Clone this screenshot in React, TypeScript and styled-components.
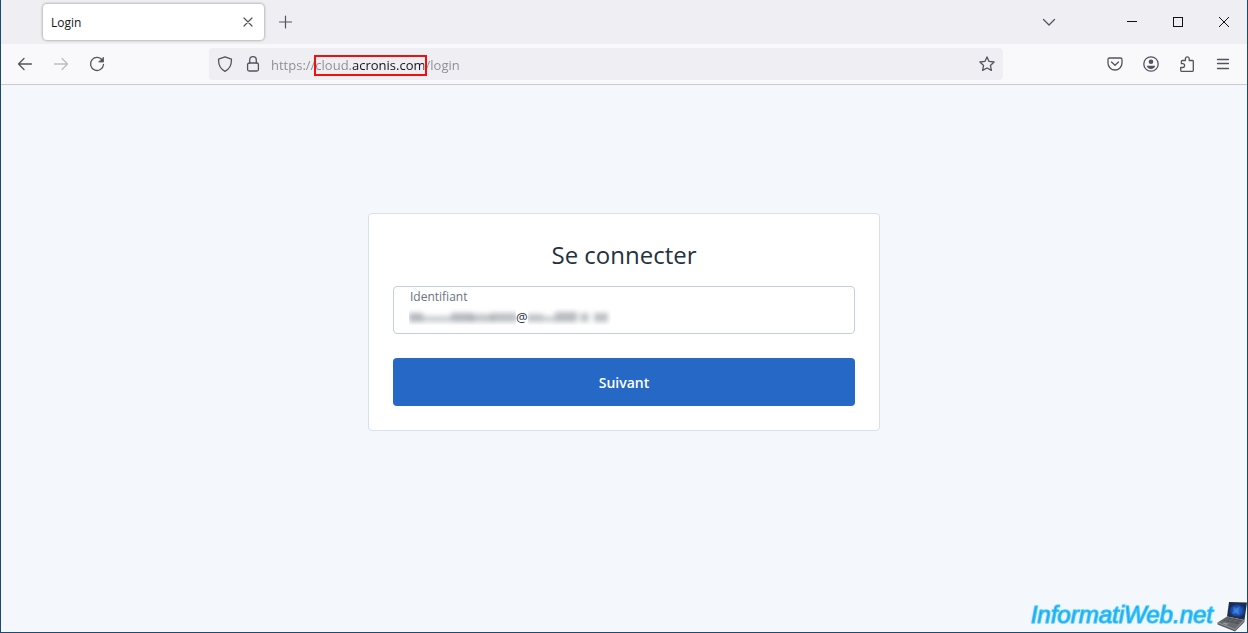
import React, { useState } from "react";
import styled, { createGlobalStyle } from "styled-components";

const GlobalStyle = createGlobalStyle`
  *, *::before, *::after { box-sizing: border-box; }
  body { margin: 0; font-family: "Open Sans", "Noto Sans", sans-serif; }
  button, input { font-family: inherit; }
`;

const Window = styled.div`
  position: relative;
  display: flex;
  flex-direction: column;
  min-height: 100vh;
  border: solid #1b4a72;
  border-width: 0 1px 1px;
  background: #f4f7fc;
`;

const TabStrip = styled.header`
  display: flex;
  align-items: center;
  height: 44px;
  padding-left: 42px;
  background: #eeeef3;
`;

const Tab = styled.div`
  display: flex;
  align-items: center;
  justify-content: space-between;
  width: 221px;
  height: 36px;
  padding: 0 4px 0 8px;
  border-radius: 4px;
  background: #fff;
  box-shadow: 0 0 3px rgba(0, 0, 0, 0.45);
  font-size: 12px;
  color: #15141a;
`;

const IconButton = styled.button<{ $width?: number; $faded?: boolean }>`
  display: flex;
  align-items: center;
  justify-content: center;
  flex: none;
  width: ${(p) => p.$width ?? 36}px;
  height: 32px;
  padding: 0;
  border: 0;
  background: none;
  color: ${(p) => (p.$faded ? "#bdbdc3" : "#55545d")};
`;

const TabActions = styled.div`
  display: flex;
  flex: 1;
  padding-left: 4px;
`;

const WindowControls = styled.div`
  display: flex;
  button { color: #111; }
`;

const TabListSlot = styled.div`
  margin-right: 42px;
`;

const Toolbar = styled.nav`
  display: flex;
  align-items: center;
  height: 41px;
  padding: 0 6px;
  border-bottom: 1px solid #cbcbd2;
  background: #f9f9fb;
`;

const ToolGroup = styled.div<{ $basis: number; $end?: boolean }>`
  display: flex;
  flex: 1 0 ${(p) => p.$basis}px;
  justify-content: ${(p) => (p.$end ? "flex-end" : "flex-start")};
`;

const AddressBar = styled.div`
  display: flex;
  align-items: center;
  flex: 0 1 794px;
  min-width: 320px;
  height: 32px;
  padding: 0 2px;
  border-radius: 4px;
  background: #eeeef3;
`;

const AddressField = styled.div`
  position: relative;
  display: flex;
  flex: 1;
  padding: 2px 0 0 4px;
`;

/* The registrable domain is darker than the rest of the address. */
const AddressInput = styled.input`
  flex: 1;
  min-width: 0;
  height: 24px;
  padding: 0;
  border: 0;
  outline: 0;
  font-size: 13px;
  line-height: 24px;
  color: #15141a;
  background: linear-gradient(
    to right,
    #8c8b92 80px,
    #15141a 80px,
    #15141a 153px,
    #8c8b92 153px
  );
  background-clip: text;
  -webkit-background-clip: text;
  -webkit-text-fill-color: transparent;
`;

const DomainHighlight = styled.span`
  position: absolute;
  top: 4px;
  left: 47px;
  width: 113px;
  height: 21px;
  border: 2px solid #f01010;
  pointer-events: none;
`;

const Page = styled.main`
  display: flex;
  flex: 1;
  justify-content: center;
  align-items: flex-start;
  padding: 128px 24px;
`;

const Card = styled.form`
  display: flex;
  flex-direction: column;
  width: 100%;
  max-width: 512px;
  padding: 24px;
  border: 1px solid #d7e0ee;
  border-radius: 4px;
  background: #fff;
`;

const Title = styled.h1`
  margin: 0 0 14px;
  font-size: 24px;
  line-height: 34px;
  font-weight: 400;
  text-align: center;
  color: #243143;
`;

const Field = styled.div`
  position: relative;
  display: flex;
  margin-bottom: 24px;
`;

const FieldLabel = styled.label`
  position: absolute;
  top: 3px;
  left: 17px;
  font-size: 12px;
  line-height: 16px;
  color: #6b7480;
`;

const FieldInput = styled.input`
  width: 100%;
  height: 48px;
  padding: 16px 16px 2px 122px;
  border: 1px solid #c3cfe4;
  border-radius: 4px;
  outline: 0;
  background: #fff;
  font-size: 13px;
  color: #243143;
`;

const Redaction = styled.svg`
  position: absolute;
  top: 22px;
  left: 16px;
  pointer-events: none;
`;

const Submit = styled.button`
  height: 48px;
  border: 0;
  border-radius: 4px;
  background: #2668c5;
  font-size: 14px;
  font-weight: 600;
  color: #fff;
`;

const Watermark = styled.a`
  position: absolute;
  right: -1px;
  bottom: 0;
  display: flex;
  align-items: center;
  gap: 4px;
  height: 32px;
  font-family: "Liberation Sans", Arial, sans-serif;
  font-size: 24px;
  font-style: italic;
  line-height: 32px;
  color: #1f9ff0;
  -webkit-text-stroke: 1px #35c3fa;
  text-shadow: 0 0 2px #6fe0ff;
  text-decoration: none;
`;

const WatermarkText = styled.span`
  padding-bottom: 2px;
`;

type IconProps = { children: React.ReactNode; size?: number; weight?: number };

const Icon = ({ children, size = 16, weight = 1.3 }: IconProps) => (
  <svg
    width={size}
    height={size}
    viewBox="0 0 16 16"
    fill="none"
    stroke="currentColor"
    strokeWidth={weight}
    strokeLinecap="round"
    strokeLinejoin="round"
    aria-hidden="true"
  >
    {children}
  </svg>
);

/* x, top, width and opacity of each blurred mark */
const marks = [
  [0, 5, 14, 0.5], [14, 8, 14, 0.32], [28, 8, 14, 0.32], [42, 5, 22, 0.48], [62, 6, 22, 0.38], [82, 5, 26, 0.42],
  [118, 6, 16, 0.4], [134, 8, 12, 0.3], [146, 4, 22, 0.46], [171, 5, 9, 0.38], [185, 5, 14, 0.42],
];

const HiddenLogin = () => (
  <Redaction width="202" height="17" viewBox="0 0 202 17" aria-hidden="true">
    <defs>
      <filter id="soft" x="-10%" y="-80%" width="120%" height="260%">
        <feGaussianBlur stdDeviation="2.6" />
      </filter>
      <clipPath id="parts">
        <rect width="107" height="17" />
        <rect x="119" width="83" height="17" />
      </clipPath>
    </defs>
    <g clipPath="url(#parts)">
      <g filter="url(#soft)" fill="#7d838c">
        {marks.map(([x, y, w, o]) => (
          <rect key={x} x={x} y={y} width={w} height={14 - y} opacity={o + 0.08} />
        ))}
      </g>
    </g>
  </Redaction>
);

const Laptop = () => (
  <svg width="31" height="32" viewBox="0 0 31 32" aria-hidden="true">
    <defs>
      <radialGradient id="screen">
        <stop offset="0" stopColor="#3279dc" />
        <stop offset="0.6" stopColor="#1c4fae" />
        <stop offset="1" stopColor="#102a63" />
      </radialGradient>
    </defs>
    <path d="M12 2 30 2.500 27.500 20 10 16.500z" fill="#2b2e37" />
    <path d="M13 3.500 28.700 4 26.500 18 11.500 15z" fill="url(#screen)" />
    <path d="M16 6l3 3 4-3-2 5 2 4-4-2-4 1 2-4z" fill="#5aa6f5" opacity="0.4" />
    <path d="M10 16.500 27.500 20 18 29.500 0.500 22.500z" fill="#686a70" />
    <path d="M10.500 17.500 25 20.500 21 24 6 20.500z" fill="#4a4c53" />
    <path d="M8 19.500 23 22.700M9.500 18.500 24 21.600M12 17.800 8 21M16 18.700 12 22M20 19.500 16 23" stroke="#777a82" strokeWidth="0.5" />
    <path d="M7 22.500 12 23.700 9.500 25 5.500 23.600z" fill="#96989d" />
    <path d="M0.500 22.500 18 29.500 27.500 20V22L18 31.500 0.500 24.500z" fill="#5a5c62" />
    <path d="M0.500 22.500 18 29.500 27.500 20" fill="none" stroke="#a0a2a7" strokeWidth="0.6" />
  </svg>
);

export default function App() {
  const [address, setAddress] = useState("https://cloud.acronis.com/login");
  const [login, setLogin] = useState("@");

  return (
    <>
      <GlobalStyle />
      <Window>
        <TabStrip>
          <Tab>
            <span>Login</span>
            <IconButton $width={24} aria-label="Close tab">
              <Icon weight={1.2}><path d="M4 4l8 8M12 4l-8 8" /></Icon>
            </IconButton>
          </Tab>
          <TabActions>
            <IconButton aria-label="New tab">
              <Icon weight={1.2}><path d="M7.500 2v12M1.500 8h12" /></Icon>
            </IconButton>
          </TabActions>
          <TabListSlot>
            <IconButton aria-label="List all tabs">
              <Icon><path d="M2.500 5.500 8 11l5.500-5.500" /></Icon>
            </IconButton>
          </TabListSlot>
          <WindowControls>
            <IconButton $width={46} aria-label="Minimize">
              <svg width="10" height="10" aria-hidden="true"><path d="M0 4.500h10" stroke="currentColor" /></svg>
            </IconButton>
            <IconButton $width={46} aria-label="Maximize">
              <svg width="10" height="10" aria-hidden="true"><rect x="0.500" y="0.500" width="9" height="9" fill="none" stroke="currentColor" /></svg>
            </IconButton>
            <IconButton $width={46} aria-label="Close">
              <svg width="10" height="10" aria-hidden="true"><path d="M0 0l10 10M10 0 0 10" stroke="currentColor" /></svg>
            </IconButton>
          </WindowControls>
        </TabStrip>

        <Toolbar>
          <ToolGroup $basis={202}>
            <IconButton aria-label="Back">
              <Icon><path d="M14.500 8H1.500M7 2.500 1.500 8 7 13.500" /></Icon>
            </IconButton>
            <IconButton $faded aria-label="Forward">
              <Icon><path d="M1.500 8h13M9 2.500 14.500 8 9 13.500" /></Icon>
            </IconButton>
            <IconButton aria-label="Reload">
              <Icon>
                <path d="M13.600 4.600A6.500 6.500 0 1 0 14.500 8.500" />
                <path d="M14.500 1.500v4.500h-4.500z" fill="currentColor" strokeWidth="0.8" />
              </Icon>
            </IconButton>
          </ToolGroup>
          <AddressBar>
            <IconButton $width={28} aria-label="Tracking protection">
              <Icon><path d="M8 .8 14.400 3.200C14.700 8.500 12.800 13 8 15.300 3.200 13 1.300 8.500 1.600 3.200z" /></Icon>
            </IconButton>
            <IconButton $width={28} aria-label="Site information">
              <Icon>
                <rect x="2.600" y="7" width="10.800" height="8" rx="1.500" />
                <path d="M4.700 7V4a3.300 3.300 0 0 1 6.600 0v3" />
              </Icon>
            </IconButton>
            <AddressField>
              <AddressInput
                aria-label="Address"
                value={address}
                spellCheck={false}
                onChange={(e) => setAddress(e.target.value)}
              />
              <DomainHighlight />
            </AddressField>
            <IconButton $width={28} aria-label="Bookmark this page">
              <Icon>
                <path d="M8 .9l2.100 4.500 5 .6-3.700 3.400 1 5L8 12l-4.400 2.400 1-5L.9 6l5-.6z" />
              </Icon>
            </IconButton>
          </AddressBar>
          <ToolGroup $basis={238} $end>
            <IconButton aria-label="Save to Pocket">
              <Icon>
                <path d="M2.500 2h11a1.500 1.500 0 0 1 1.500 1.500V7a7 7 0 0 1-14 0V3.500A1.500 1.500 0 0 1 2.500 2z" />
                <path d="M4.500 6 8 9.300 11.500 6" />
              </Icon>
            </IconButton>
            <IconButton aria-label="Account">
              <Icon>
                <circle cx="8" cy="8" r="7.200" />
                <circle cx="8" cy="5.800" r="2.300" fill="currentColor" stroke="none" />
                <path d="M3.800 9.700h8.400C12 11.500 10.300 12.900 8 12.900S4 11.500 3.800 9.700z" fill="currentColor" stroke="none" />
              </Icon>
            </IconButton>
            <IconButton aria-label="Extensions">
              <Icon>
                <path d="M2.500 15.300h11a.8.8 0 0 0 .8-.8V5.300a.8.800 0 0 0-.8-.8H10.200V2.700a1.900 1.900 0 0 0-3.800 0V4.500H3.200a.8.800 0 0 0-.8.8V7.700H3.700a1.900 1.900 0 0 1 0 3.800H1.700V14.500a.8.800 0 0 0 .8.800z" />
              </Icon>
            </IconButton>
            <IconButton aria-label="Menu">
              <Icon><path d="M2.500 3.500h11M2.500 7.500h11M2.500 12.500h11" /></Icon>
            </IconButton>
          </ToolGroup>
        </Toolbar>

        <Page>
          <Card onSubmit={(e) => e.preventDefault()}>
            <Title>Se connecter</Title>
            <Field>
              <FieldInput id="login" value={login} onChange={(e) => setLogin(e.target.value)} />
              <FieldLabel htmlFor="login">Identifiant</FieldLabel>
              <HiddenLogin />
            </Field>
            <Submit type="submit">Suivant</Submit>
          </Card>
        </Page>

        <Watermark href="#">
          <WatermarkText>InformatiWeb.net</WatermarkText>
          <Laptop />
        </Watermark>
      </Window>
    </>
  );
}
